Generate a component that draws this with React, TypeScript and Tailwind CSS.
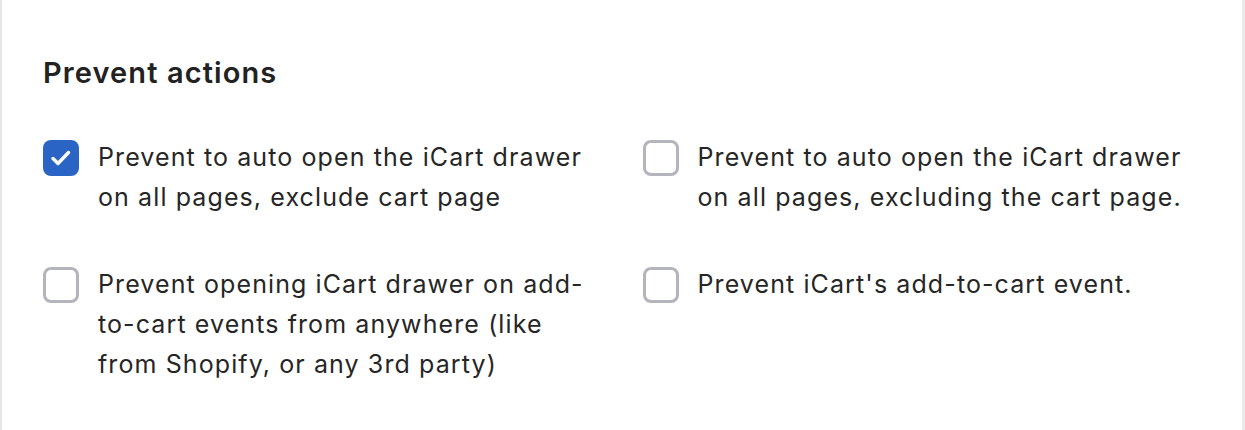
import { useState } from "react"

const options = [
  { id: "auto-open", label: "Prevent to auto open the iCart drawer on all pages, exclude cart page", checked: true },
  { id: "auto-open-2", label: "Prevent to auto open the iCart drawer on all pages, excluding the cart page.", checked: false },
  { id: "atc-open", label: "Prevent opening iCart drawer on add-to-cart events from anywhere (like from Shopify, or any 3rd party)", checked: false },
  { id: "atc-event", label: "Prevent iCart's add-to-cart event.", checked: false },
]

function Checkbox({ checked }: { checked: boolean }) {
  if (checked) {
    return (
      <span className="flex h-[36px] w-[36px] shrink-0 items-center justify-center rounded-[8px] bg-[#2a64c5]">
        <svg width="24" height="24" viewBox="0 0 24 24" fill="none">
          <path d="M4 12.5l5 5 10.5-11" stroke="#fff" strokeWidth="3.4" strokeLinecap="round" strokeLinejoin="round" />
        </svg>
      </span>
    )
  }
  return <span className="block h-[36px] w-[36px] shrink-0 rounded-[8px] border-[3px] border-[#b4b4bc] bg-white" />
}

export default function App() {
  const [state, setState] = useState(options.map((o) => o.checked))

  return (
    <main className="flex h-[430px] w-[1245px] bg-white font-['Inter',sans-serif] text-[#262626]">
      <div className="w-[2px] bg-[#e6e6e6]" />
      <div className="flex-1 pl-[41px] pr-[46px] pt-[53px]">
        <h2 className="text-[29px] font-semibold leading-[40px] tracking-[1.1px] text-[#222]">Prevent actions</h2>

        <div className="mt-[44px] grid grid-cols-2 gap-x-[46px] gap-y-[47px]">
          {options.map((o, i) => (
            <label
              key={o.id}
              className="flex cursor-pointer items-start gap-[19px]"
              onClick={() => setState((s) => s.map((v, j) => (j === i ? !v : v)))}
            >
              <span className="block shrink-0 pt-[3px]">
                <Checkbox checked={state[i]} />
              </span>
              <span className="text-[25px] leading-[40px] tracking-[1.1px] text-[#262626]">{o.label}</span>
            </label>
          ))}
        </div>
      </div>
      <div className="w-[3px] bg-[#ebebeb]" />
    </main>
  )
}
